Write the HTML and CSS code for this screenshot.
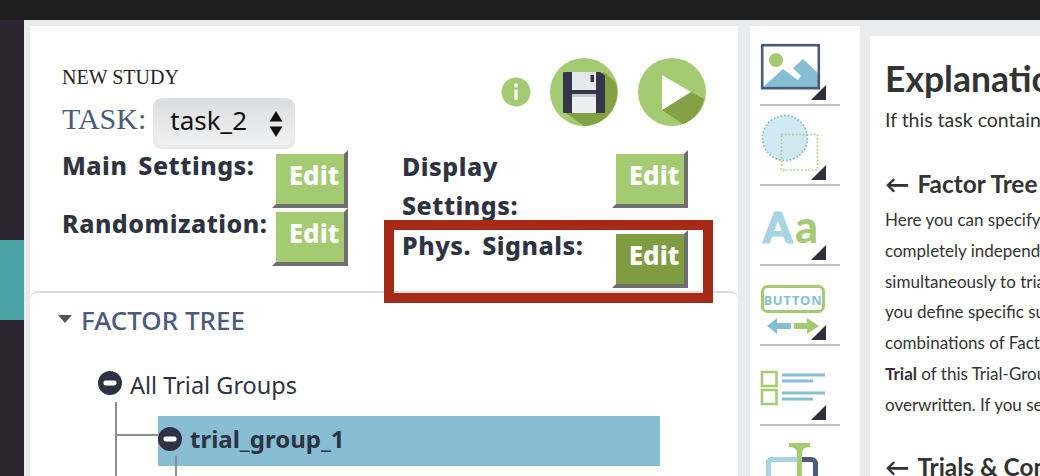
FILE: index.html
```html
<!DOCTYPE html>
<html lang="en">
<head>
    <meta charset="UTF-8">
    <title>New Study</title>
    <link rel="stylesheet" href="styles.css">
</head>
<body>
    <div class="topbar"></div>
    <div class="app">
        <div class="sidebar"><div class="sidebar-tab"></div></div>
        <div class="workspace">
            <div class="editor">
                <div class="study-header">
                    <div class="study-title">
                        <div class="study-name">NEW STUDY</div>
                        <div class="task-row">
                            <span class="task-label">TASK<span class="task-colon">:</span></span>
                            <div class="task-select">
                                <span class="task-value">task_2</span>
                                <svg class="select-arrows" width="14" height="26" viewBox="0 0 14 26">
                                    <path d="M7 0 L13.5 10.5 H0.5 Z M0.5 15.5 H13.5 L7 26 Z" fill="#111"/>
                                </svg>
                            </div>
                        </div>
                    </div>
                    <div class="study-actions">
                        <svg class="info-btn" width="30" height="30" viewBox="0 0 30 30">
                            <circle cx="15" cy="15" r="14.5" fill="#a5cb72"/>
                            <circle cx="15" cy="8.5" r="2" fill="#fff"/>
                            <rect x="13.4" y="12.5" width="3.2" height="10.5" rx="1" fill="#fff"/>
                        </svg>
                        <svg class="round-btn" width="68" height="68" viewBox="0 0 68 68">
                            <circle cx="34" cy="34" r="34" fill="#a5cb72"/>
                            <path d="M54 14 L66 25 A34 34 0 0 1 34 68 L13 53 Z" fill="#84a146"/>
                            <path d="M14 15 H50 L54 18 V54 H14 Z" fill="#35364a" stroke="#35364a" stroke-width="2" stroke-linejoin="round"/>
                            <rect x="22" y="14" width="24" height="18" fill="#e6e8ec"/>
                            <rect x="40.5" y="17" width="3.5" height="7" fill="#35364a"/>
                            <rect x="22" y="36" width="24" height="19" fill="#eceef0"/>
                            <rect x="22" y="36" width="24" height="3" fill="#c9cbd0"/>
                        </svg>
                        <svg class="round-btn" width="68" height="68" viewBox="0 0 68 68">
                            <circle cx="34" cy="34" r="34" fill="#a5cb72"/>
                            <path d="M24 52 L53 34 L66 41 A34 34 0 0 1 45 66 Z" fill="#84a146"/>
                            <path d="M24 17 L53 34 L24 52 Z" fill="#fff"/>
                        </svg>
                    </div>
                </div>
                <div class="settings">
                    <div class="setting">
                        <span class="setting-label">Main Settings:</span>
                        <a class="edit-btn">Edit</a>
                    </div>
                    <div class="setting setting-right">
                        <span class="setting-label setting-label-wrap">Display Settings:</span>
                        <a class="edit-btn">Edit</a>
                    </div>
                    <div class="setting">
                        <span class="setting-label">Randomization:</span>
                        <a class="edit-btn">Edit</a>
                    </div>
                    <div class="setting setting-right setting-phys">
                        <span class="setting-label">Phys. Signals:</span>
                        <a class="edit-btn edit-btn-active">Edit</a>
                        <div class="highlight-box"></div>
                    </div>
                </div>
                <div class="factor-panel">
                    <div class="factor-title">
                        <svg width="14" height="8" viewBox="0 0 14 8"><path d="M0 0 H14 L7 8 Z" fill="#55555a"/></svg>
                        <span class="factor-label">FACTOR TREE</span>
                    </div>
                    <div class="tree">
                        <div class="tree-root">
                            <svg class="tree-toggle" width="24" height="24" viewBox="0 0 24 24">
                                <circle cx="12" cy="12" r="12" fill="#2f3241"/>
                                <rect x="5.5" y="9.5" width="13" height="5" rx="2" fill="#fff"/>
                            </svg>
                            <span class="tree-root-label">All Trial Groups</span>
                        </div>
                        <div class="tree-children">
                            <div class="tree-node">
                                <svg class="tree-toggle" width="24" height="24" viewBox="0 0 24 24">
                                    <circle cx="12" cy="12" r="12" fill="#2f3241"/>
                                    <rect x="5.5" y="9.5" width="13" height="5" rx="2" fill="#fff"/>
                                </svg>
                                <span>trial_group_1</span>
                            </div>
                        </div>
                    </div>
                </div>
            </div>
            <div class="toolbar">
                <div class="tool">
                    <svg width="80" height="78" viewBox="0 0 80 78">
                        <path d="M3 61 L23 43 L38 54 L41 50 L33 42 L43 33 L58 47 V61 Z" fill="#86bfd4"/>
                        <rect x="2.2" y="19.2" width="56.6" height="43" fill="none" stroke="#4a5a7c" stroke-width="2.6"/>
                        <circle cx="16" cy="34" r="7" fill="#a5cb72"/>
                        <path d="M51 74 L66 59 V74 Z" fill="#2e2e3c"/>
                    </svg>
                </div>
                <div class="tool">
                    <svg width="80" height="78" viewBox="0 0 80 78">
                        <circle cx="25" cy="32" r="22.5" fill="#cfe8f2" stroke="#7db5cb" stroke-width="1.6" stroke-dasharray="1.6 2"/>
                        <rect x="21.5" y="28.5" width="36" height="35.5" fill="none" stroke="#a5cb72" stroke-width="1.6" stroke-dasharray="1.6 2"/>
                        <path d="M51 74 L66 59 V74 Z" fill="#2e2e3c"/>
                    </svg>
                </div>
                <div class="tool">
                    <svg width="80" height="78" viewBox="0 0 80 78">
                        <text class="icon-letter" x="3" y="57" font-size="42" fill="#a8d4e3" stroke="#a8d4e3">A</text>
                        <text class="icon-letter" x="35" y="57" font-size="45" fill="#a5cb72">a</text>
                        <path d="M51 74 L66 59 V74 Z" fill="#2e2e3c"/>
                    </svg>
                </div>
                <div class="tool">
                    <svg width="80" height="78" viewBox="0 0 80 78">
                        <rect x="2.5" y="20.5" width="61" height="25" rx="5" fill="#fff" stroke="#a5cb72" stroke-width="3"/>
                        <text class="icon-button" x="33" y="38.5" text-anchor="middle">BUTTON</text>
                        <path d="M7 60 L17 52 V57 H31 V63 H17 V68 Z" fill="#86bfd4"/>
                        <path d="M59 60 L47 52 V57 H34 V63 H47 V68 Z" fill="#a5cb72"/>
                        <path d="M51 74 L66 59 V74 Z" fill="#2e2e3c"/>
                    </svg>
                </div>
                <div class="tool">
                    <svg width="80" height="78" viewBox="0 0 80 78">
                        <rect x="2" y="26" width="14.5" height="14" fill="none" stroke="#a5cb72" stroke-width="2.6"/>
                        <rect x="2" y="44" width="14.5" height="14" fill="none" stroke="#a5cb72" stroke-width="2.6"/>
                        <path d="M22 29 H65 M22 35 H53 M22 47 H65 M22 53 H53" stroke="#86bfd4" stroke-width="3"/>
                        <path d="M51 74 L66 59 V74 Z" fill="#2e2e3c"/>
                    </svg>
                </div>
                <div class="tool">
                    <svg width="80" height="78" viewBox="0 0 80 78">
                        <rect x="8.5" y="33.5" width="47" height="22" rx="4" fill="#fff" stroke="#4a5a7c" stroke-width="5"/>
                        <path d="M40 33.5 H12.5 A4 4 0 0 0 8.5 37.5 V51.5 A4 4 0 0 0 12.5 55.5 H40" fill="#fff" stroke="#a8d4e3" stroke-width="5"/>
                        <path d="M29 17 H50 V21 Q42 21 42 27 V60 H37 V27 Q37 21 29 21 Z" fill="#a5cb72"/>
                    </svg>
                </div>
            </div>
            <div class="explanation">
                <h1>Explanation</h1>
                <p class="lead">If this task contains</p>
                <h2><span class="arrow">&#8592;</span>Factor Tree</h2>
                <p class="body-text">Here you can specify the<br>completely independent<br>simultaneously to trials<br>you define specific sub<br>combinations of Factor<br><b>Trial</b> of this Trial-Group<br>overwritten. If you set</p>
                <h2 class="second-heading"><span class="arrow">&#8592;</span>Trials &amp; Conditions</h2>
            </div>
        </div>
    </div>
</body>
</html>
```

FILE: styles.css
```css
html, body {
    margin: 0;
    padding: 0;
    height: 100%;
    overflow: hidden;
}
body {
    background: #e9ebec;
    font-family: "Noto Sans", sans-serif;
    color: #2f3241;
}
.topbar {
    height: 20px;
    background: #1f1f1f;
}
.app {
    display: flex;
    height: 456px;
}
.sidebar {
    width: 24px;
    flex-shrink: 0;
    background: #2b2630;
    padding-top: 220px;
    box-sizing: border-box;
}
.sidebar-tab {
    height: 80px;
    background: #4ba3a8;
}
.workspace {
    flex: 1;
    display: flex;
    align-items: flex-start;
    padding: 6px 0 0 6px;
    overflow: hidden;
    background: #e9ebec;
}

/* left editor panel */
.editor {
    width: 708px;
    height: 460px;
    flex-shrink: 0;
    background: #fff;
    box-sizing: border-box;
}
.study-header {
    display: flex;
    justify-content: space-between;
    padding: 32px 32px 0 32px;
    height: 122px;
    box-sizing: border-box;
}
.study-name {
    font-family: "Liberation Serif", serif;
    font-size: 20px;
    line-height: 22px;
    color: #222;
    margin-top: 8px;
}
.task-row {
    display: flex;
    align-items: flex-start;
    gap: 7px;
    margin-top: 10px;
}
.task-label {
    font-family: "Liberation Serif", serif;
    font-size: 30px;
    line-height: 42px;
    color: #4a5a7c;
}
.task-colon {
    color: #555;
}
.task-select {
    width: 142px;
    height: 51px;
    display: flex;
    align-items: center;
    justify-content: space-between;
    padding: 0 12px 0 17px;
    box-sizing: border-box;
    border-radius: 9px;
    background: linear-gradient(#dcdde0, #f1f2f3);
    box-shadow: inset 0 -3px 4px #e4e5e7;
    font-size: 26px;
    color: #111;
}
.task-value {
    padding-bottom: 7px;
}
.study-actions {
    display: flex;
    align-items: center;
    gap: 20px;
    height: 68px;
}
.info-btn {
    margin-right: -1px;
}
.settings {
    display: grid;
    grid-template-columns: 340px 282px;
    grid-template-rows: 58px 78px;
    padding: 6px 0 0 32px;
    height: 142px;
    box-sizing: border-box;
}
.setting {
    display: flex;
    justify-content: space-between;
    align-items: flex-start;
    width: 282px;
    position: relative;
}
.setting-label {
    font-size: 25px;
    font-weight: 800;
    line-height: 39px;
    letter-spacing: 0.5px;
    word-spacing: 4px;
    margin-top: -8px;
    white-space: nowrap;
}
.setting-label-wrap {
    white-space: normal;
    width: 170px;
    margin-top: -7px;
}
.setting-phys {
    margin-top: 22px;
    height: 50px;
}
/* bevelled edges: the transparent top and left borders cut the corners */
.edit-btn {
    display: block;
    width: 60px;
    height: 50px;
    margin: -4px -4px 0 0;
    padding-left: 8px;
    line-height: 42px;
    text-align: center;
    font-size: 26px;
    font-weight: 800;
    color: #fff;
    background: #a5cb72;
    background-clip: padding-box;
    border: 4px solid #6f6f6f;
    border-top-color: transparent;
    border-left-color: transparent;
}
.edit-btn-active {
    background-color: #7f9c40;
}
.highlight-box {
    position: absolute;
    left: -18px;
    top: -14px;
    width: 329px;
    height: 83px;
    box-sizing: border-box;
    border: 10px solid #a52a17;
}

/* factor tree */
.factor-panel {
    border-top: 2px solid #dcdcdc;
    border-radius: 8px 8px 0 0;
    margin-top: 1px;
    padding: 0 0 0 28px;
    height: 190px;
}
.factor-title {
    display: flex;
    align-items: center;
    gap: 9px;
    height: 52px;
    font-size: 26px;
    font-weight: 500;
    color: #4a5a7c;
}
.factor-label {
    padding-top: 2px;
}
.tree {
    padding: 26px 0 0 40px;
}
.tree-root {
    display: flex;
    align-items: center;
    gap: 8px;
    height: 24px;
    font-size: 23.5px;
}
.tree-root-label {
    padding-top: 3px;
}
.tree-children {
    position: relative;
    margin-left: 17px;
    height: 100px;
    border-left: 2px solid #8d8d8d;
    margin-top: 7px;
    padding-top: 14px;
    padding-left: 41px;
    box-sizing: border-box;
}
.tree-children::before {
    content: "";
    position: absolute;
    left: 0;
    top: 32px;
    width: 42px;
    height: 2px;
    background: #8d8d8d;
}
.tree-children::after {
    content: "";
    position: absolute;
    left: 58px;
    top: 54px;
    width: 2px;
    height: 40px;
    background: #8d8d8d;
}
.tree-node {
    display: flex;
    align-items: center;
    gap: 8px;
    width: 502px;
    height: 50px;
    background: #87bed4;
    font-size: 24px;
    font-weight: 700;
    padding-bottom: 5px;
    box-sizing: border-box;
}

/* middle toolbar */
.toolbar {
    width: 110px;
    height: 460px;
    flex-shrink: 0;
    margin-left: 12px;
    padding-left: 10px;
    box-sizing: border-box;
    background: #fff;
    overflow: hidden;
}
.tool {
    width: 80px;
    height: 78px;
    border-bottom: 2px solid #c4c4c4;
}
.tool svg {
    display: block;
}
.icon-letter {
    font-family: "Lato", sans-serif;
    font-weight: 900;
    stroke-width: 1.2px;
    stroke-linejoin: round;
}
.icon-button {
    font-family: "Noto Sans", sans-serif;
    font-weight: 700;
    font-size: 13px;
    letter-spacing: 0.8px;
    fill: #86bfd4;
}

/* right explanation panel */
.explanation {
    flex: 1;
    min-width: 0;
    height: 440px;
    margin: 10px 0 0 10px;
    padding: 0 0 0 15px;
    background: #fff;
    font-family: "Lato", sans-serif;
    color: #333;
    white-space: nowrap;
    overflow: hidden;
}
.explanation h1 {
    font-size: 35.5px;
    line-height: 40px;
    font-weight: 700;
    margin: 23px 0 0 0;
}
.lead {
    font-size: 19.5px;
    line-height: 24px;
    margin: 9px 0 0 0;
}
.explanation h2 {
    font-size: 24.4px;
    line-height: 28px;
    font-weight: 700;
    margin: 38px 0 0 0;
}
.arrow {
    font-weight: 700;
    margin-right: 8px;
}
.body-text {
    font-size: 17px;
    line-height: 30.8px;
    margin: 7px 0 0 0;
}
.explanation .second-heading {
    margin-top: 32px;
}
```
